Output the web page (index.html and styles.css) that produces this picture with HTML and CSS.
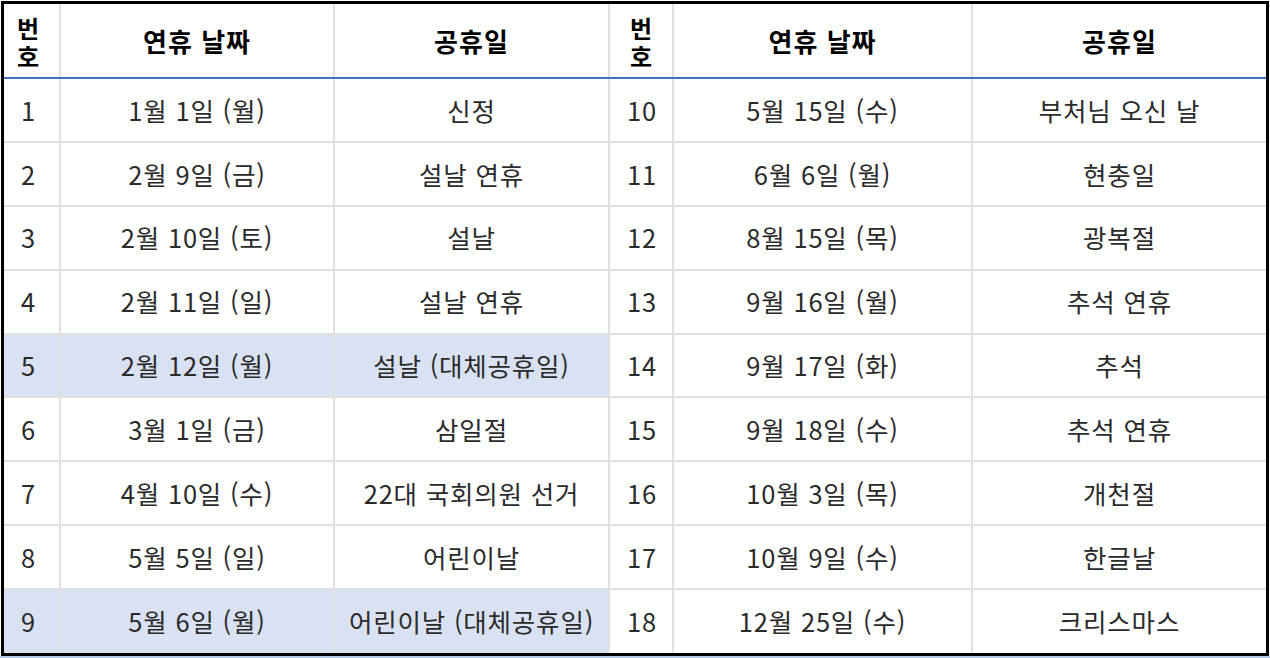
FILE: index.html
```html
<!DOCTYPE html>
<html lang="ko">
<head>
<meta charset="utf-8">
<title>2024 공휴일</title>
<link rel="stylesheet" href="styles.css">
</head>
<body>
<div class="page">
  <div class="frame">
    <table class="holidays">
      <colgroup>
        <col class="c-no1"><col class="c-date1"><col class="c-name1">
        <col class="c-no2"><col class="c-date2"><col class="c-name2">
      </colgroup>
      <thead>
        <tr>
          <th class="no first">번호</th><th>연휴 날짜</th><th>공휴일</th>
          <th class="no">번호</th><th>연휴 날짜</th><th>공휴일</th>
        </tr>
      </thead>
      <tbody>
        <tr><td>1</td><td>1월 1일 (월)</td><td>신정</td><td>10</td><td>5월 15일 (수)</td><td>부처님 오신 날</td></tr>
        <tr><td>2</td><td>2월 9일 (금)</td><td>설날 연휴</td><td>11</td><td>6월 6일 (월)</td><td>현충일</td></tr>
        <tr><td>3</td><td>2월 10일 (토)</td><td>설날</td><td>12</td><td>8월 15일 (목)</td><td>광복절</td></tr>
        <tr><td>4</td><td>2월 11일 (일)</td><td>설날 연휴</td><td>13</td><td>9월 16일 (월)</td><td>추석 연휴</td></tr>
        <tr><td class="hl">5</td><td class="hl">2월 12일 (월)</td><td class="hl">설날 (대체공휴일)</td><td>14</td><td>9월 17일 (화)</td><td>추석</td></tr>
        <tr><td>6</td><td>3월 1일 (금)</td><td>삼일절</td><td>15</td><td>9월 18일 (수)</td><td>추석 연휴</td></tr>
        <tr><td>7</td><td>4월 10일 (수)</td><td>22대 국회의원 선거</td><td>16</td><td>10월 3일 (목)</td><td>개천절</td></tr>
        <tr><td>8</td><td>5월 5일 (일)</td><td>어린이날</td><td>17</td><td>10월 9일 (수)</td><td>한글날</td></tr>
        <tr><td class="hl">9</td><td class="hl">5월 6일 (월)</td><td class="hl">어린이날 (대체공휴일)</td><td>18</td><td>12월 25일 (수)</td><td>크리스마스</td></tr>
      </tbody>
    </table>
  </div>
</div>
</body>
</html>
```

FILE: styles.css
```css
html, body {
  margin: 0;
  padding: 0;
  background: #ffffff;
}

body {
  font-family: "Noto Sans CJK KR", "Noto Sans", sans-serif;
  color: #2b2b2b;
}

.page {
  width: 1270px;
  padding: 1px 1px 0 1px;
  box-sizing: border-box;
  border-bottom: 2px solid #b4c7e7;
}

.frame {
  width: 1268px;
  height: 655px;
  box-sizing: border-box;
  border: 3px solid #000000;
  overflow: hidden;
}

.holidays {
  width: 1262px;
  height: 649px;
  border-collapse: collapse;
  table-layout: fixed;
}

.c-no1 { width: 56px; }
.c-date1 { width: 274px; }
.c-name1 { width: 275px; }
.c-no2 { width: 64px; }
.c-date2 { width: 299px; }
.c-name2 { width: 294px; }

.holidays th,
.holidays td {
  border: 2px solid #e0e0e0;
  text-align: center;
  vertical-align: middle;
  padding: 0 4px;
  font-size: 25.5px;
  letter-spacing: 0.8px;
  line-height: 1.2;
  white-space: nowrap;
}

.holidays tr > :first-child { border-left: none; }
.holidays tr > :last-child { border-right: none; }
.holidays thead th { border-top: none; }
.holidays tbody tr:last-child td { border-bottom: none; }

.holidays thead tr { height: 74px; }
.holidays tbody tr { height: 63.8px; }

.holidays th {
  font-weight: 700;
  color: #000000;
  font-size: 26px;
  letter-spacing: 1px;
  border-bottom: 2px solid #4472c4;
}

.holidays th.no {
  white-space: normal;
  padding: 2px 14px 0 14px;
  font-size: 24px;
  letter-spacing: 0;
  line-height: 28px;
}

.holidays th.no.first {
  text-align: left;
  padding-left: 13px;
  padding-right: 0;
  width: 24px;
}

.holidays td:first-child,
.holidays td:nth-child(4) {
  text-align: left;
  padding-left: 17px;
}

.holidays td.hl {
  background: #d9e2f3;
}
```
